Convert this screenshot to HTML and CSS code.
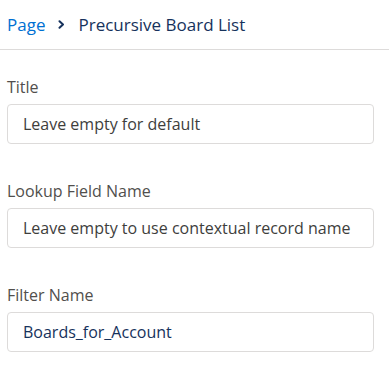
FILE: index.html
```html
<!DOCTYPE html>
<html lang="en">
<head>
<meta charset="utf-8">
<title>Precursive Board List</title>
<link rel="stylesheet" href="styles.css">
</head>
<body>
<header class="crumbs">
  <a class="crumb-link" href="#">Page</a>
  <svg class="chev" width="7" height="9" viewBox="0 0 7 9" aria-hidden="true"><path d="M1.5 1.2 L5 4.5 L1.5 7.8" fill="none" stroke="#16325c" stroke-width="2" stroke-linecap="round" stroke-linejoin="round"/></svg>
  <span class="crumb-current">Precursive Board List</span>
</header>
<main class="form">
  <div class="field">
    <label class="field-label" for="f1">Title</label>
    <input class="field-input" id="f1" type="text" placeholder="Leave empty for default">
  </div>
  <div class="field">
    <label class="field-label" for="f2">Lookup Field Name</label>
    <input class="field-input" id="f2" type="text" placeholder="Leave empty to use contextual record name">
  </div>
  <div class="field">
    <label class="field-label" for="f3">Filter Name</label>
    <input class="field-input" id="f3" type="text" value="Boards_for_Account">
  </div>
</main>
</body>
</html>
```
FILE: styles.css
```css
* { box-sizing: border-box; }
html, body { margin: 0; padding: 0; background: #fff; }
body { font-family: "Open Sans", "Noto Sans", sans-serif; color: #16325c; }

.crumbs {
  height: 50px;
  border-bottom: 1px solid #dddbda;
  display: flex;
  align-items: center;
  padding: 0 0 0 7px;
  font-size: 17px;
}
.crumb-link { color: #0070d2; text-decoration: none; }
.chev { margin: 0 13px 0 13px; }
.crumb-current { color: #16325c; }

.form { padding: 27px 15px 0 7px; display: flex; flex-direction: column; gap: 37px; }
.field { display: flex; flex-direction: column; gap: 7px; }
.field-label { font-size: 16px; line-height: 20px; color: #514f4d; }
.field-input {
  height: 40px;
  border: 1px solid #dddbda;
  border-radius: 4px;
  padding: 0 15px;
  font-family: inherit;
  font-size: 16px;
  color: #16325c;
  background: #fff;
  outline: none;
  width: 100%;
}
.field-input::placeholder { color: #3e3e3c; opacity: 1; }
```
